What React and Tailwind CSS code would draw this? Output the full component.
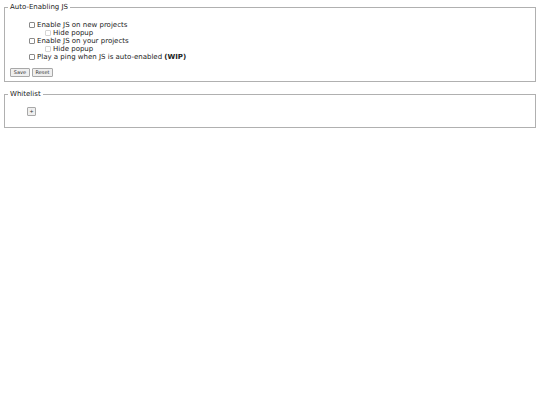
import React from 'react';

const Box = ({ disabled }) => (
    <span className={`inline-block w-[6px] h-[6px] border rounded-[1px] bg-white shrink-0 ${disabled ? 'border-[#d4d4d4]' : 'border-[#8a8a8a]'}`} />
);

const Option = ({ label, indent, disabled }) => (
    <div className={`flex items-center h-[8px] leading-[8px] gap-[2px] ${indent ? 'ml-[35px]' : 'ml-[19px]'}`}>
        <Box disabled={disabled} />
        <span className="whitespace-nowrap">{label}</span>
    </div>
);

const SmallButton = ({ children, className }) => (
    <button className={`h-[9px] border border-[#a8a8a8] bg-[#efefef] rounded-[1px] text-[5px] leading-[7px] text-[#333] ${className}`}>
        {children}
    </button>
);

const App = () => {
    return (
        <div className="w-[540px] h-[405px] bg-white text-[#222] text-[7px] pt-[3px]" style={{ fontFamily: '"DejaVu Sans", Verdana, sans-serif' }}>
            <fieldset className="mx-[4px] border border-[#b0b0b0] px-[5px] pb-[4px]">
                <legend className="ml-[-2px] px-[2px] leading-[8px]">Auto-Enabling JS</legend>
                <div className="mt-[10px]">
                    <Option label="Enable JS on new projects" />
                    <Option label="Hide popup" indent disabled />
                    <Option label="Enable JS on your projects" />
                    <Option label="Hide popup" indent disabled />
                    <Option label={<>Play a ping when JS is auto-enabled <b>(WIP)</b></>} />
                </div>
                <div className="flex gap-[2px] mt-[7px]">
                    <SmallButton className="w-[20px]">Save</SmallButton>
                    <SmallButton className="w-[21px]">Reset</SmallButton>
                </div>
            </fieldset>

            <fieldset className="mx-[4px] mt-[8px] border border-[#b0b0b0] px-[5px] pb-[11px]">
                <legend className="ml-[-2px] px-[2px] leading-[8px]">Whitelist</legend>
                <div className="mt-[9px] ml-[17px] flex">
                    <SmallButton className="w-[9px] h-[8px] leading-[6px]">+</SmallButton>
                </div>
            </fieldset>
        </div>
    );
};

export default App;
